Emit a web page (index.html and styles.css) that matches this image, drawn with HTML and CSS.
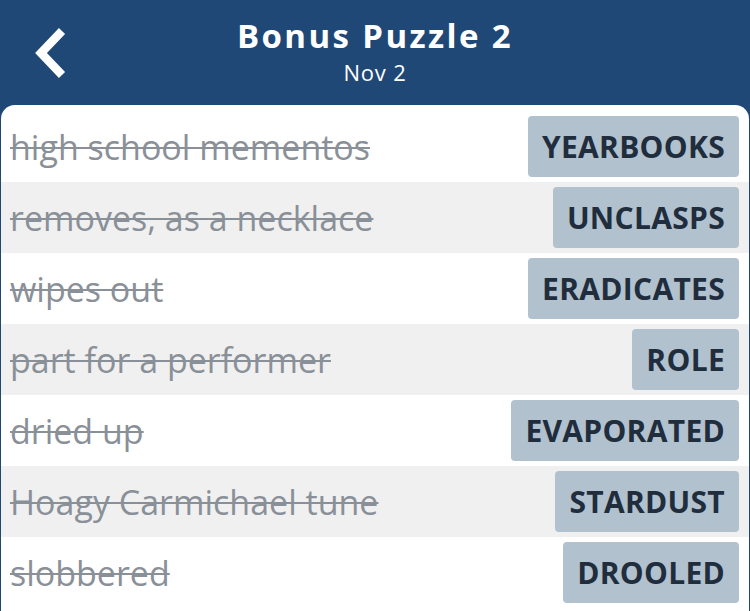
FILE: index.html
```html
<!DOCTYPE html>
<html lang="en">
<head>
    <meta charset="UTF-8">
    <meta name="viewport" content="width=device-width, initial-scale=1.0">
    <title>Bonus Puzzle 2</title>
    <link rel="stylesheet" href="styles.css">
</head>
<body>
    <header class="topbar">
        <a href="#" class="back" aria-label="Back">
            <svg width="40" height="56" viewBox="0 0 40 56">
                <path d="M31 6 L10 28 L31 50" fill="none" stroke="#fff" stroke-width="8.5" stroke-linejoin="miter"/>
            </svg>
        </a>
        <div class="heading">
            <h1>Bonus Puzzle 2</h1>
            <p>Nov 2</p>
        </div>
    </header>

    <main class="card">
        <div class="row">
            <span class="clue">high school mementos</span>
            <span class="answer">YEARBOOKS</span>
        </div>
        <div class="row">
            <span class="clue">removes, as a necklace</span>
            <span class="answer">UNCLASPS</span>
        </div>
        <div class="row">
            <span class="clue">wipes out</span>
            <span class="answer">ERADICATES</span>
        </div>
        <div class="row">
            <span class="clue">part for a performer</span>
            <span class="answer">ROLE</span>
        </div>
        <div class="row">
            <span class="clue">dried up</span>
            <span class="answer">EVAPORATED</span>
        </div>
        <div class="row">
            <span class="clue">Hoagy Carmichael tune</span>
            <span class="answer">STARDUST</span>
        </div>
        <div class="row">
            <span class="clue">slobbered</span>
            <span class="answer">DROOLED</span>
        </div>
    </main>
</body>
</html>
```

FILE: styles.css
```css
body {
    margin: 0;
    font-family: "Open Sans", "Noto Sans", sans-serif;
    background-color: #1f4876;
    height: 611px;
    overflow: hidden;
}
.topbar {
    position: relative;
    height: 105px;
    display: flex;
    justify-content: center;
    align-items: center;
    color: #fff;
}
.back {
    position: absolute;
    left: 31px;
    top: 25px;
    display: block;
}
.heading {
    text-align: center;
    margin-top: -4px;
}
.heading h1 {
    margin: 0;
    font-size: 33px;
    font-weight: 700;
    letter-spacing: 2.4px;
    line-height: 40px;
}
.heading p {
    margin: 3px 0 0;
    font-size: 22px;
    letter-spacing: 0.8px;
    line-height: 26px;
}
.card {
    background: #fff;
    border-radius: 14px 14px 0 0;
    margin: 0 1px;
    padding-top: 6px;
    height: 500px;
}
.row {
    display: flex;
    justify-content: space-between;
    align-items: center;
    height: 71px;
    padding: 0 10px 0 9px;
}
.row:nth-child(even) {
    background-color: #f0f0f0;
}
.clue {
    font-size: 34px;
    color: #8a9098;
    text-decoration: line-through;
    text-decoration-thickness: 2px;
}
.answer {
    background-color: #b1c1ce;
    color: #1f2d3d;
    font-size: 30px;
    font-weight: 700;
    letter-spacing: 0.3px;
    padding: 0 14px;
    height: 61px;
    line-height: 61px;
    border-radius: 4px;
    margin-top: -1px;
}
```
